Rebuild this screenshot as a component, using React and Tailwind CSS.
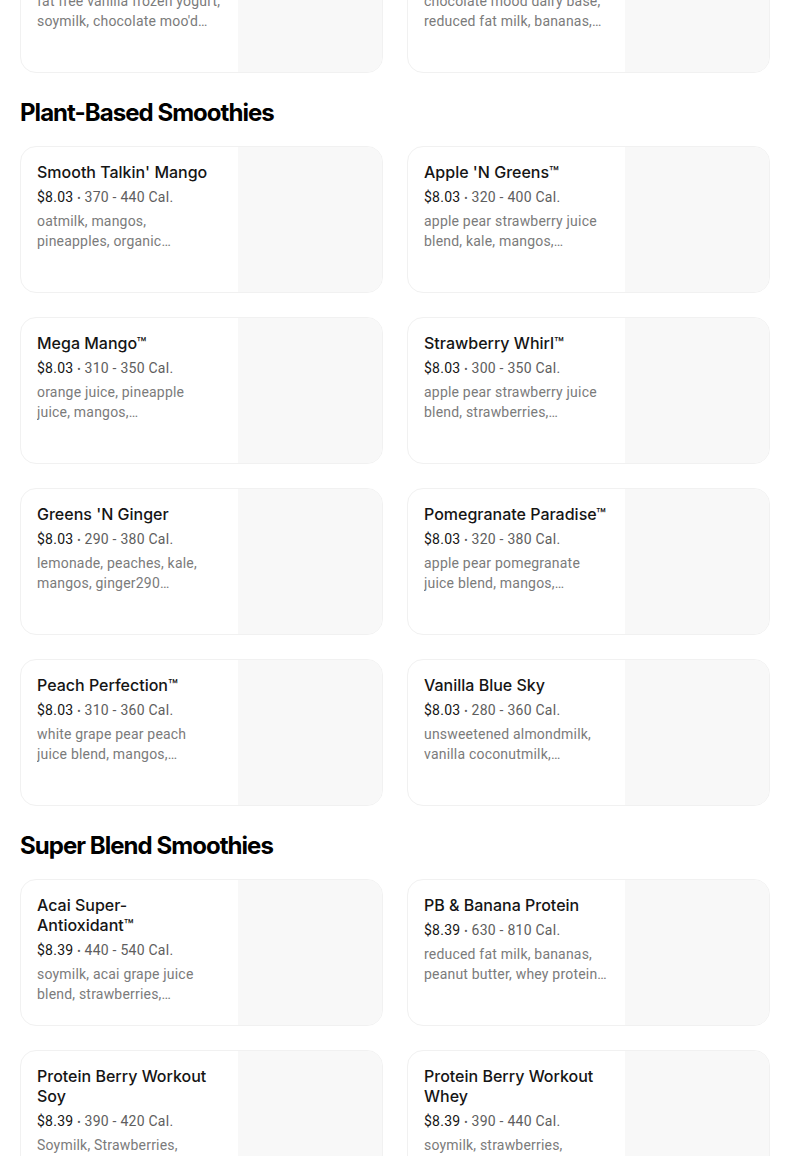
const sections = [
  {
    title: null,
    items: [
      {
        name: "Chocolate Moo'd™",
        price: "$7.59",
        cal: "620 - 780 Cal.",
        desc: "fat free vanilla frozen yogurt, soymilk, chocolate moo'd dairy base, bananas",
      },
      {
        name: "Peanut Butter Moo'd™",
        price: "$7.59",
        cal: "690 - 850 Cal.",
        desc: "chocolate mood dairy base, reduced fat milk, bananas, peanut butter",
      },
    ],
  },
  {
    title: "Plant-Based Smoothies",
    items: [
      { name: "Smooth Talkin' Mango", price: "$8.03", cal: "370 - 440 Cal.", desc: "oatmilk, mangos, pineapples, organic strawberries, bananas" },
      { name: "Apple 'N Greens™", price: "$8.03", cal: "320 - 400 Cal.", desc: "apple pear strawberry juice blend, kale, mangos, peaches, bananas" },
      { name: "Mega Mango™", price: "$8.03", cal: "310 - 350 Cal.", desc: "orange juice, pineapple juice, mangos, strawberries, bananas", narrow: true },
      { name: "Strawberry Whirl™", price: "$8.03", cal: "300 - 350 Cal.", desc: "apple pear strawberry juice blend, strawberries, raspberries" },
      { name: "Greens 'N Ginger", price: "$8.03", cal: "290 - 380 Cal.", desc: "lemonade, peaches, kale, mangos, ginger290 strawberries, bananas" },
      { name: "Pomegranate Paradise™", price: "$8.03", cal: "320 - 380 Cal.", desc: "apple pear pomegranate juice blend, mangos, strawberries, pineapples" },
      { name: "Peach Perfection™", price: "$8.03", cal: "310 - 360 Cal.", desc: "white grape pear peach juice blend, mangos, strawberries, peaches", narrow: true },
      { name: "Vanilla Blue Sky", price: "$8.03", cal: "280 - 360 Cal.", desc: "unsweetened almondmilk, vanilla coconutmilk, bananas, blue spirulina" },
    ],
  },
  {
    title: "Super Blend Smoothies",
    items: [
      { name: "Acai Super-Antioxidant™", price: "$8.39", cal: "440 - 540 Cal.", desc: "soymilk, acai grape juice blend, strawberries, blueberries, bananas" },
      { name: "PB & Banana Protein", price: "$8.39", cal: "630 - 810 Cal.", desc: "reduced fat milk, bananas, peanut butter, whey protein, honey" },
      { name: "Protein Berry Workout Soy", price: "$8.39", cal: "390 - 420 Cal.", desc: "Soymilk, Strawberries, Bananas, Soy Protein, Turbinado" },
      { name: "Protein Berry Workout Whey", price: "$8.39", cal: "390 - 440 Cal.", desc: "soymilk, strawberries, bananas, whey protein, turbinado" },
    ],
  },
];

function ItemCard({ item }) {
  return (
    <div className="flex min-h-[147px] overflow-hidden rounded-2xl border border-[#f1f1f1] bg-white">
      <div className="flex-1 min-w-0 px-4 pt-[15px] pb-4">
        <p className="font-['Inter',sans-serif] text-base font-medium leading-5 text-[#151515]">
          {item.name}
        </p>
        <p className="mt-[5px] text-sm leading-5 tracking-[0.25px]">
          <span className="text-[#151515]">{item.price}</span>
          <span className="text-[#5e5e5e]">
            {" "}
            <span className="text-[10px]">•</span> {item.cal}
          </span>
        </p>
        <p
          className={`mt-[2px] line-clamp-2 text-sm leading-5 tracking-[0.2px] text-[#7b7b7b] ${
            item.narrow ? "max-w-[176px]" : ""
          }`}
        >
          {item.desc}
        </p>
      </div>
      <div className="w-[144px] shrink-0 bg-[#f8f8f8]" />
    </div>
  );
}

export default function App() {
  return (
    <div className="h-[1156px] overflow-hidden bg-white font-['Roboto',sans-serif]">
      <div className="-mt-[74px] px-5 pr-[34px]">
        {sections.map((section, i) => (
          <section key={i}>
            {section.title && (
              <h2 className="mt-6 mb-[17px] font-['Inter',sans-serif] text-2xl font-bold leading-8 tracking-[-0.04em] text-black">
                {section.title}
              </h2>
            )}
            <div className="grid grid-cols-2 gap-x-6 gap-y-6">
              {section.items.map((item) => (
                <ItemCard key={item.name} item={item} />
              ))}
            </div>
          </section>
        ))}
      </div>
    </div>
  );
}
